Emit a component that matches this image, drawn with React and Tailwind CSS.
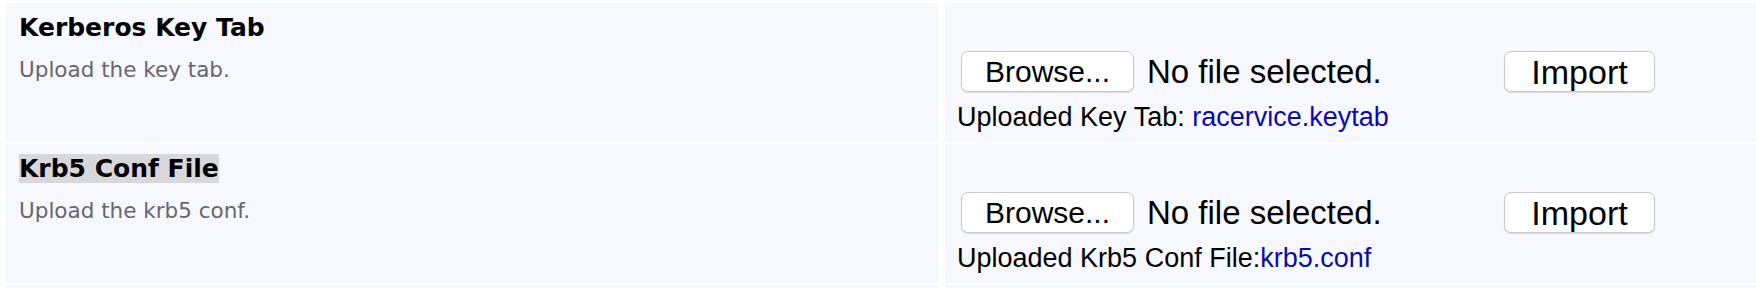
import React from 'react';

const rows = [
    {
        title: 'Kerberos Key Tab',
        description: 'Upload the key tab.',
        label: 'Uploaded Key Tab: ',
        file: 'racervice.keytab',
        highlight: false,
    },
    {
        title: 'Krb5 Conf File',
        description: 'Upload the krb5 conf.',
        label: 'Uploaded Krb5 Conf File:',
        file: 'krb5.conf',
        highlight: true,
    },
];

const verdana = { fontFamily: '"DejaVu Sans", Verdana, sans-serif' };
const helv = { fontFamily: '"Liberation Sans", Arial, sans-serif' };

const FileButton = ({ children, className = '' }) => (
    <button
        type="button"
        className={`h-[41px] bg-white border border-[#c9c9cc] rounded-[7px] shadow-[0_1px_1px_rgba(0,0,0,0.12)] text-black leading-none ${className}`}
        style={helv}
    >
        {children}
    </button>
);

const App = () => {
    return (
        <div className="w-[1756px] h-[288px] bg-white overflow-hidden pt-[3px] pl-[6px]">
            <div className="grid grid-cols-[932px_820px] gap-x-[7px] gap-y-[2px]">
                {rows.map((row) => (
                    <React.Fragment key={row.title}>
                        <div className="h-[139px] bg-[#f7f8fd] pl-[13px] pt-[10px]" style={verdana}>
                            <div className="leading-[30px]">
                                <span className={`text-[25px] font-bold text-black ${row.highlight ? 'bg-[#d8d8dc]' : ''}`}>
                                    {row.title}
                                </span>
                            </div>
                            <div className="mt-[10px] text-[21.5px] leading-[28px] text-[#666670]">{row.description}</div>
                        </div>
                        <div className="h-[139px] bg-[#f7f8fd] pl-[16px] pt-[48px]">
                            <div className="flex items-center">
                                <div className="w-[543px] flex items-center">
                                    <FileButton className="w-[173px] text-[30px]">Browse...</FileButton>
                                    <span className="ml-[13px] text-[33px] leading-none text-black" style={helv}>
                                        No file selected.
                                    </span>
                                </div>
                                <FileButton className="w-[151px] text-[34px]">Import</FileButton>
                            </div>
                            <div className="mt-[9px] -ml-[4px] text-[27px] leading-[32px] text-black" style={helv}>
                                {row.label}
                                <a href="#" className="text-[#0b0ba8]">{row.file}</a>
                            </div>
                        </div>
                    </React.Fragment>
                ))}
                <div className="h-[20px] bg-[#f7f8fd]" />
                <div className="h-[20px] bg-[#f7f8fd]" />
            </div>
        </div>
    );
};

export default App;
